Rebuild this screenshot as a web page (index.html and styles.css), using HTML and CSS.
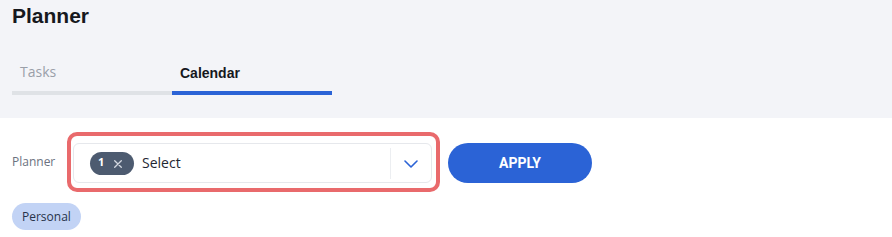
FILE: index.html
```html
<!DOCTYPE html>
<html lang="en">
<head>
<meta charset="utf-8">
<title>Planner</title>
<link rel="stylesheet" href="styles.css">
</head>
<body>
<header class="header">
  <h1 class="title">Planner</h1>
  <nav class="tabs">
    <div class="tab">Tasks</div>
    <div class="tab tab-active">Calendar</div>
  </nav>
</header>
<main class="content">
  <div class="form-row">
    <label class="field-label">Planner</label>
    <div class="focus-ring">
      <div class="select">
        <span class="count-chip"><span class="count">1</span><svg class="chip-x" width="8" height="8" viewBox="0 0 8 8"><path d="M0.7 0.7 L7.3 7.3 M7.3 0.7 L0.7 7.3" stroke="#d3d8e0" stroke-width="1.3" fill="none" stroke-linecap="round"/></svg></span>
        <span class="placeholder">Select</span>
        <span class="select-arrow"><svg width="14" height="8" viewBox="0 0 14 8"><path d="M1 1 L7 7 L13 1" stroke="#2b63d6" stroke-width="1.6" fill="none" stroke-linecap="round" stroke-linejoin="round"/></svg></span>
      </div>
    </div>
    <button class="apply">APPLY</button>
  </div>
  <div class="tag-list">
    <span class="tag">Personal</span>
  </div>
</main>
</body>
</html>
```

FILE: styles.css
```css
* { box-sizing: border-box; }
html, body { margin: 0; padding: 0; background: #ffffff; }
body { font-family: "Open Sans", "Noto Sans", sans-serif; }

.header {
  background: #f3f4f8;
  height: 118px;
  padding: 3px 12px 0;
}
.title {
  margin: 0;
  font-family: "Liberation Sans", Arial, sans-serif;
  font-weight: 700;
  font-size: 21px;
  line-height: 26px;
  color: #16181d;
}
.tabs {
  display: flex;
  margin-top: 33px;
}
.tab {
  width: 160px;
  padding: 0 8px 9px;
  line-height: 20px;
  font-size: 14px;
  color: #9a9fa8;
  border-bottom: 4px solid #dfe2e6;
}
.tab-active {
  font-family: "Liberation Sans", Arial, sans-serif;
  font-weight: 700;
  color: #16181d;
  border-bottom-color: #2b63d6;
  padding-top: 1px;
  padding-bottom: 8px;
}

.content {
  padding: 14px 12px 0;
}
.form-row {
  display: flex;
  align-items: center;
}
.field-label {
  width: 55px;
  font-size: 12px;
  color: #6b7280;
  line-height: 16px;
}
.focus-ring {
  border: 4px solid #e96a6c;
  border-radius: 10px;
  padding: 7px 4px 5px 2px;
}
.select {
  width: 359px;
  height: 40px;
  border: 1px solid #e6e8ec;
  border-radius: 6px;
  display: flex;
  align-items: center;
  padding-left: 16px;
  background: #fff;
}
.count-chip {
  display: flex;
  align-items: center;
  height: 23px;
  width: 44px;
  border-radius: 12px;
  background: #4d5b70;
  padding-left: 8px;
  margin-top: 1px;
}
.count {
  font-weight: 700;
  font-size: 11px;
  color: #fff;
  line-height: 11px;
  margin-top: -5px;
  width: 6px;
}
.chip-x {
  margin-left: 10px;
  margin-top: 1px;
}
.placeholder {
  margin-left: 8px;
  font-size: 14px;
  color: #1f2733;
  flex: 1;
  margin-top: -1px;
}
.select-arrow {
  width: 41px;
  height: 31px;
  border-left: 1px solid #eceef1;
  display: flex;
  align-items: center;
  justify-content: center;
  margin-top: 1px;
}
.apply {
  margin-left: 8px;
  width: 144px;
  height: 40px;
  border: none;
  border-radius: 20px;
  background: #2b63d6;
  color: #fff;
  font-family: Roboto, "Liberation Sans", Arial, sans-serif;
  font-weight: 700;
  font-size: 14px;
  margin-top: 2px;
  padding: 0;
}
.tag-list {
  margin-top: 11px;
  display: flex;
}
.tag {
  display: inline-block;
  height: 27px;
  line-height: 27px;
  padding: 0 10px;
  border-radius: 14px;
  background: #c2d3f5;
  font-size: 12px;
  color: #27324a;
}
```
